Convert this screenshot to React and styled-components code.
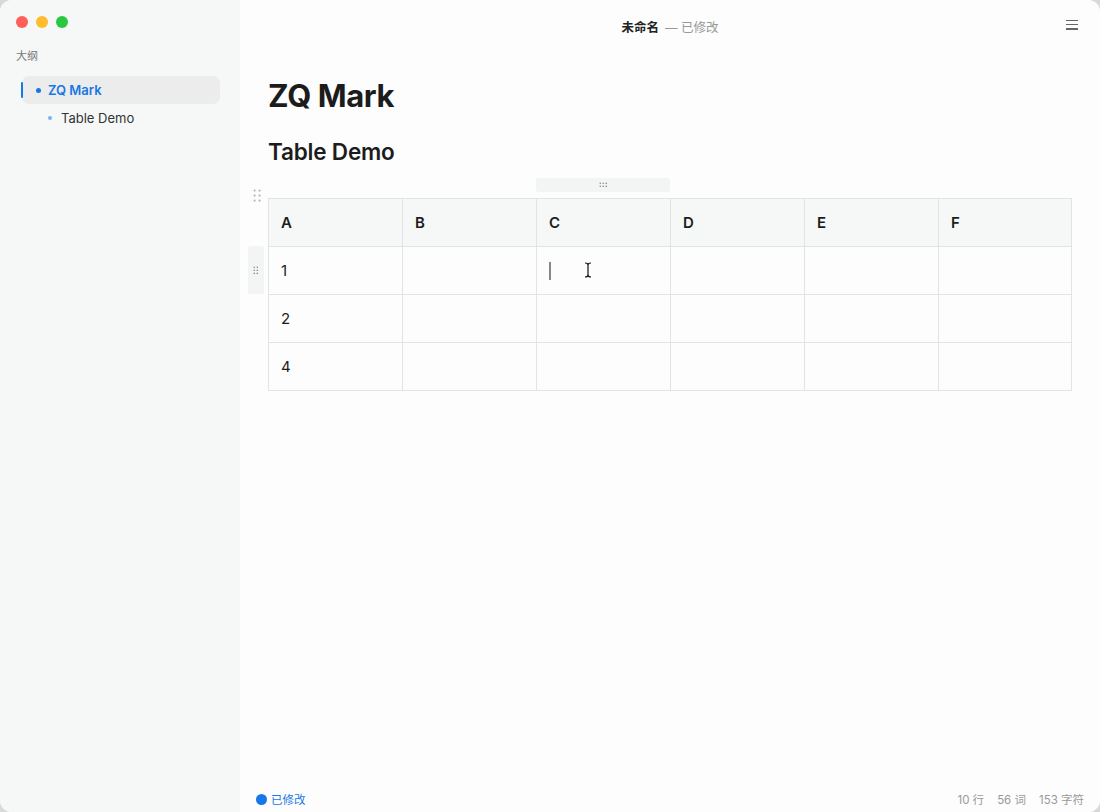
import React from "react";
import styled, { createGlobalStyle } from "styled-components";

const Global = createGlobalStyle`
  html, body { margin: 0; padding: 0; background: #d9d9d9; }
  body { font-family: Inter, "Noto Sans CJK SC", sans-serif; }
  * { box-sizing: border-box; }
`;

const Window = styled.div`
  width: 1100px;
  height: 812px;
  display: flex;
  border-radius: 12px;
  overflow: hidden;
  background: #fcfdfc;
`;

const Sidebar = styled.aside`
  width: 240px;
  flex: none;
  background: #f5f8f6;
  display: flex;
  flex-direction: column;
  padding: 16px 20px 0 16px;
`;

const Lights = styled.div`
  display: flex;
  gap: 8px;
  height: 12px;
`;

const Light = styled.span`
  width: 12px;
  height: 12px;
  border-radius: 50%;
  background: ${(p) => p.$c};
`;

const OutlineLabel = styled.div`
  margin-top: 21px;
  font-size: 11px;
  color: #777;
  line-height: 14px;
`;

const OutlineList = styled.div`
  margin-top: 13px;
  display: flex;
  flex-direction: column;
  padding-left: 6px;
`;

const OutlineItem = styled.div`
  position: relative;
  height: 28px;
  display: flex;
  align-items: center;
  border-radius: 7px;
  background: ${(p) => (p.$active ? "#ececec" : "transparent")};
  padding-left: ${(p) => (p.$level === 2 ? 26 : 14)}px;
  font-size: 13px;
  font-weight: ${(p) => (p.$active ? 600 : 400)};
  color: ${(p) => (p.$active ? "#1677e6" : "#333")};
  gap: ${(p) => (p.$level === 2 ? 9 : 7)}px;
  &::before {
    content: "";
    display: ${(p) => (p.$active ? "block" : "none")};
    position: absolute;
    left: -1px;
    top: 6px;
    width: 2px;
    height: 16px;
    background: #1677e6;
    border-radius: 1px;
  }
`;

const Dot = styled.span`
  width: ${(p) => p.$size}px;
  height: ${(p) => p.$size}px;
  border-radius: 50%;
  background: ${(p) => p.$color};
  flex: none;
`;

const Main = styled.main`
  flex: 1;
  display: flex;
  flex-direction: column;
  background: #fcfdfc;
`;

const TopBar = styled.header`
  height: 52px;
  display: flex;
  align-items: center;
  justify-content: center;
  position: relative;
  font-size: 12.5px;
`;

const DocName = styled.span`
  font-weight: 600;
  color: #222;
`;

const DocState = styled.span`
  color: #999;
  margin-left: 6px;
`;

const MenuBtn = styled.div`
  position: absolute;
  right: 22px;
  top: 20px;
  width: 12px;
  display: flex;
  flex-direction: column;
  gap: 3px;
  span {
    height: 1.2px;
    background: #666;
  }
`;

const Content = styled.div`
  flex: 1;
  padding: 24px 28px 0 28px;
`;

const H1 = styled.h1`
  margin: 0;
  font-size: 31px;
  font-weight: 700;
  color: #1c1c1c;
  line-height: 40px;
  letter-spacing: -0.4px;
`;

const H2 = styled.h2`
  margin: 21px 0 0;
  font-size: 22.5px;
  font-weight: 600;
  color: #1c1c1c;
  line-height: 30px;
  letter-spacing: -0.2px;
`;

const TableWrap = styled.div`
  position: relative;
  margin-top: 31px;
`;

const Table = styled.div`
  display: grid;
  grid-template-columns: repeat(5, 134px) 133px;
  border-top: 1px solid #e2e4e3;
  border-left: 1px solid #e2e4e3;
  width: fit-content;
`;

const Cell = styled.div`
  height: 48px;
  border-right: 1px solid #e2e4e3;
  border-bottom: 1px solid #e2e4e3;
  background: ${(p) => (p.$head ? "#f5f8f6" : "#fcfdfc")};
  font-size: 15px;
  font-weight: ${(p) => (p.$head ? 600 : 400)};
  color: #1c1c1c;
  display: flex;
  align-items: center;
  padding-left: 12px;
  position: relative;
`;

const ColHandle = styled.div`
  position: absolute;
  left: 268px;
  top: -20px;
  width: 134px;
  height: 14px;
  background: #f2f5f3;
  border-radius: 3px;
  display: flex;
  align-items: center;
  justify-content: center;
`;

const RowHandle = styled.div`
  position: absolute;
  left: -20px;
  top: 48px;
  width: 16px;
  height: 48px;
  background: #f2f5f3;
  border-radius: 3px;
  display: flex;
  align-items: center;
  justify-content: center;
`;

const TableHandle = styled.div`
  position: absolute;
  left: -15px;
  top: -12px;
`;

const Caret = styled.span`
  width: 2px;
  height: 18px;
  background: #888;
`;

const IBeam = styled.svg`
  position: absolute;
  left: 47px;
  top: 15px;
`;

const StatusBar = styled.footer`
  height: 26px;
  display: flex;
  align-items: center;
  justify-content: space-between;
  padding: 0 16px 0 16px;
  font-size: 11.5px;
  color: #999;
`;

const Saved = styled.div`
  display: flex;
  align-items: center;
  gap: 4px;
  color: #1677e6;
`;

const Counts = styled.div`
  display: flex;
  gap: 13px;
`;

const Grip = ({ cols, rows, gap = 3, r = 0.9, color = "#999" }) => {
  const w = (cols - 1) * gap + r * 2 + 1;
  const h = (rows - 1) * gap + r * 2 + 1;
  const dots = [];
  for (let i = 0; i < cols; i++)
    for (let j = 0; j < rows; j++)
      dots.push(<circle key={i + "-" + j} cx={r + 0.5 + i * gap} cy={r + 0.5 + j * gap} r={r} fill={color} />);
  return (
    <svg width={w} height={h} viewBox={`0 0 ${w} ${h}`}>
      {dots}
    </svg>
  );
};

const headers = ["A", "B", "C", "D", "E", "F"];
const rows = [["1", "", "caret", "", "", ""], ["2", "", "", "", "", ""], ["4", "", "", "", "", ""]];

export default function App() {
  return (
    <>
      <Global />
      <Window>
        <Sidebar>
          <Lights>
            <Light $c="#fe5f57" />
            <Light $c="#febc2e" />
            <Light $c="#28c840" />
          </Lights>
          <OutlineLabel>大纲</OutlineLabel>
          <OutlineList>
            <OutlineItem $active>
              <Dot $size={5} $color="#1677e6" />
              ZQ Mark
            </OutlineItem>
            <OutlineItem $level={2}>
              <Dot $size={4} $color="#7ab3ef" />
              Table Demo
            </OutlineItem>
          </OutlineList>
        </Sidebar>
        <Main>
          <TopBar>
            <DocName>未命名</DocName>
            <DocState>— 已修改</DocState>
            <MenuBtn>
              <span />
              <span />
              <span />
            </MenuBtn>
          </TopBar>
          <Content>
            <H1>ZQ Mark</H1>
            <H2>Table Demo</H2>
            <TableWrap>
              <TableHandle>
                <Grip cols={2} rows={3} gap={5} r={1.1} color="#b5b5b5" />
              </TableHandle>
              <ColHandle>
                <Grip cols={3} rows={2} gap={3} r={0.8} color="#888" />
              </ColHandle>
              <RowHandle>
                <Grip cols={2} rows={3} gap={3} r={0.8} color="#888" />
              </RowHandle>
              <Table>
                {headers.map((h) => (
                  <Cell key={h} $head>
                    {h}
                  </Cell>
                ))}
                {rows.map((r, i) =>
                  r.map((c, j) => (
                    <Cell key={i + "-" + j}>
                      {c === "caret" ? (
                        <>
                          <Caret />
                          <IBeam width="8" height="16" viewBox="0 0 8 16">
                            <path d="M1 1 Q4 1 4 3 Q4 1 7 1 M4 3 V13 M1 15 Q4 15 4 13 Q4 15 7 15" stroke="#111" strokeWidth="1.2" fill="none" />
                          </IBeam>
                        </>
                      ) : (
                        c
                      )}
                    </Cell>
                  ))
                )}
              </Table>
            </TableWrap>
          </Content>
          <StatusBar>
            <Saved>
              <Dot $size={11} $color="#1677e6" />
              已修改
            </Saved>
            <Counts>
              <span>10 行</span>
              <span>56 词</span>
              <span>153 字符</span>
            </Counts>
          </StatusBar>
        </Main>
      </Window>
    </>
  );
}
